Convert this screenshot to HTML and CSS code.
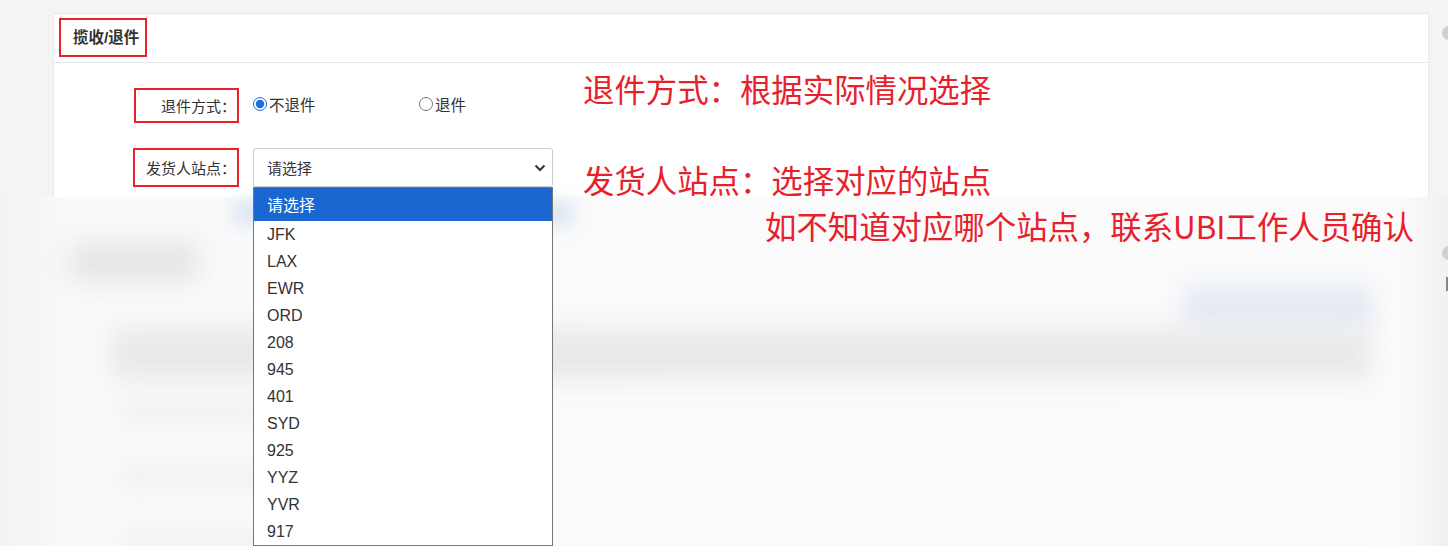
FILE: index.html
```html
<!DOCTYPE html>
<html lang="zh-CN">

<head>
    <meta charset="UTF-8">
    <title>揽收/退件</title>
    <link rel="stylesheet" href="styles.css">
</head>

<body>

    <div class="top">
        <div class="card">
            <div class="card_head">
                <div class="title mark">揽收/退件</div>
            </div>

            <div class="card_body">
                <div class="row row_first">
                    <div class="label mark label_return">退件方式：</div>
                    <label class="radio_item"><input type="radio" name="ret" checked>不退件</label>
                    <label class="radio_item"><input type="radio" name="ret">退件</label>
                </div>

                <div class="row">
                    <div class="label mark label_site">发货人站点：</div>
                    <div class="select_wrap">
                        <div class="select">
                            <span>请选择</span>
                            <svg class="chevron" width="12" height="8" viewBox="0 0 12 8">
                                <path d="M1.5 1.5 L6 6 L10.5 1.5" fill="none" stroke="#333" stroke-width="2"/>
                            </svg>
                        </div>
                        <ul class="options">
                            <li class="active">请选择</li>
                            <li>JFK</li>
                            <li>LAX</li>
                            <li>EWR</li>
                            <li>ORD</li>
                            <li>208</li>
                            <li>945</li>
                            <li>401</li>
                            <li>SYD</li>
                            <li>925</li>
                            <li>YYZ</li>
                            <li>YVR</li>
                            <li>917</li>
                        </ul>
                    </div>
                </div>
            </div>
        </div>
    </div>

    <!-- blurred part of the page behind the dropdown -->
    <div class="shade">
        <div class="ghost">
            <div class="ghost_title"></div>
            <div class="ghost_tools">
                <div class="ghost_btn"></div>
            </div>
            <div class="ghost_band"></div>
            <div class="ghost_row"><div class="ghost_cell"></div></div>
            <div class="ghost_row"><div class="ghost_cell"></div></div>
            <div class="ghost_row"><div class="ghost_cell"></div></div>
        </div>
    </div>

    <div class="note note1">退件方式：根据实际情况选择</div>
    <div class="note note2">发货人站点：选择对应的站点</div>
    <div class="note note3">如不知道对应哪个站点，联系UBI工作人员确认</div>

    <div class="edge edge1"></div>
    <div class="edge edge2"></div>
    <div class="edge_bar"></div>

</body>

</html>
```

FILE: styles.css
```css
* {
    box-sizing: border-box;
}

body {
    margin: 0;
    width: 1448px;
    height: 546px;
    overflow: hidden;
    position: relative;
    background-color: #f4f4f4;
    font-family: "Liberation Sans", "Noto Sans CJK SC", sans-serif;
    color: #333;
}

.top {
    height: 197px;
    padding: 13px 0 0 53px;
}

.card {
    width: 1376px;
    height: 184px;
    background-color: white;
    border: 1px solid #e6e8eb;
    border-bottom: none;
}

.card_head {
    height: 49px;
    padding: 4px 0 0 5px;
    border-bottom: 1px solid #e4e6e9;
}

.mark {
    border: 2px solid #e8202a;
}

.title {
    width: 88px;
    height: 39px;
    padding-left: 12px;
    font-size: 15.5px;
    font-weight: bold;
    line-height: 35px;
    color: #333;
    white-space: nowrap;
}

.card_body {
    padding-left: 79px;
}

.row {
    display: flex;
    align-items: center;
}

.row_first {
    margin-top: 25px;
    margin-bottom: 25px;
}

.label {
    height: 35px;
    padding-right: 1px;
    text-align: right;
    font-size: 15px;
    line-height: 33px;
    color: #333;
    white-space: nowrap;
}

.label_return {
    width: 105px;
    margin-left: 1px;
}

.label_site {
    width: 106px;
    height: 39px;
    line-height: 37px;
}

.radio_item {
    display: flex;
    align-items: center;
    width: 166px;
    margin-left: 14px;
    margin-top: -3px;
    font-size: 15.5px;
    color: #333;
}

.radio_item + .radio_item {
    margin-left: 0;
}

.radio_item input {
    width: 14px;
    height: 14px;
    margin: 0 2px 0 0;
    accent-color: #1a6fdc;
}

.select_wrap {
    position: relative;
    z-index: 5;
    margin-left: 14px;
}

.select {
    display: flex;
    align-items: center;
    justify-content: space-between;
    width: 300px;
    height: 39px;
    padding: 0 6px 0 13px;
    border: 1px solid #ccc;
    border-radius: 3px;
    background-color: white;
    font-size: 15px;
    color: #333;
}

.options {
    position: absolute;
    top: 39px;
    left: 0;
    width: 300px;
    margin: 0;
    padding: 0;
    list-style: none;
    background-color: white;
    border: 1px solid #767676;
    font-size: 16px;
    color: #333;
}

/* blue haze of the blurred highlight behind the list */
.options::before {
    content: "";
    position: absolute;
    z-index: -1;
    top: 12px;
    left: -22px;
    right: -22px;
    height: 26px;
    background-color: rgba(26, 103, 210, 0.13);
    filter: blur(9px);
}

.options li {
    height: 27px;
    padding-left: 13px;
    line-height: 27px;
}

.options li.active {
    height: 33px;
    line-height: 35px;
    background-color: #1a67d2;
    color: white;
}

/* blurred page */

.shade {
    position: relative;
    z-index: 1;
    height: 349px;
    background: linear-gradient(to right, #f3f3f3 0, #f6f6f6 40px, #fafafa 70px, #fbfbfb 1400px, #f3f3f3 1433px, #f1f1f1 1448px);
    overflow: hidden;
}

.ghost {
    width: 1380px;
    margin-left: 53px;
    padding-top: 45px;
}

.ghost_title {
    width: 130px;
    height: 40px;
    margin-left: 16px;
    border-radius: 10px;
    background-color: #e4e4e4;
    filter: blur(14px);
}

.ghost_tools {
    display: flex;
    justify-content: flex-end;
    padding-right: 60px;
    margin-top: 4px;
}

.ghost_btn {
    width: 190px;
    height: 42px;
    border-radius: 8px;
    background-color: #e3e9f3;
    filter: blur(12px);
}

.ghost_band {
    height: 52px;
    margin: 0 62px 0 58px;
    background-color: #e9e9e9;
    filter: blur(12px);
}

.ghost_row {
    height: 66px;
    margin: 0 62px 0 58px;
    padding: 18px 0 0 10px;
}

.ghost_cell {
    width: 260px;
    height: 28px;
    background-color: #f2f2f2;
    filter: blur(10px);
}

/* annotations */

.note {
    position: absolute;
    z-index: 6;
    font-family: "Noto Sans CJK SC", sans-serif;
    font-size: 31.4px;
    line-height: 31px;
    color: #e8202a;
    white-space: nowrap;
}

.note1 {
    left: 583px;
    top: 73px;
}

.note2 {
    left: 583px;
    top: 164px;
}

.note3 {
    left: 765px;
    top: 210px;
}

.edge {
    position: absolute;
    z-index: 6;
    right: -8px;
    width: 14px;
    height: 14px;
    border-radius: 50%;
    background-color: #d0d0d0;
}

.edge1 {
    top: 26px;
}

.edge2 {
    top: 246px;
}

.edge_bar {
    position: absolute;
    z-index: 6;
    right: 0;
    top: 277px;
    width: 2px;
    height: 14px;
    background-color: #888;
}
```
